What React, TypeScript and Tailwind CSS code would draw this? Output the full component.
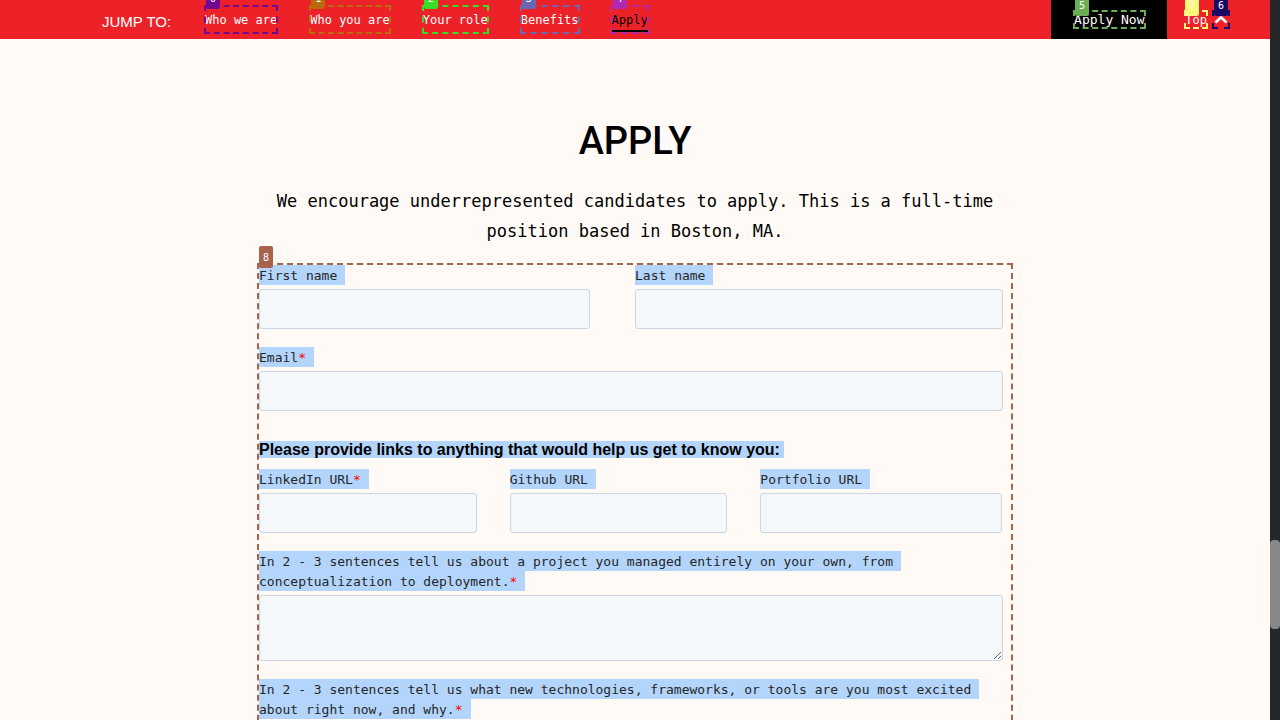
import type { ReactNode } from "react";

const MONO = "font-['DejaVu_Sans_Mono',monospace]";

function Badge({ n, className }: { n: number; className: string }) {
  return (
    <span
      className={`absolute flex h-[22px] w-[14px] items-center justify-center rounded-[2px] pt-[2px] font-['DejaVu_Sans_Mono',monospace] text-[10px] leading-none text-white ${className}`}
    >
      {n}
    </span>
  );
}

const LINKS = [
  { text: "Who we are", outline: "outline-[#720891]", badge: "bg-[#720891]", color: "text-white" },
  { text: "Who you are", outline: "outline-[#b96a0a]", badge: "bg-[#b96a0a]", color: "text-white" },
  { text: "Your role", outline: "outline-[#38dd25]", badge: "bg-[#38dd25]", color: "text-white" },
  { text: "Benefits", outline: "outline-[#6a68b5]", badge: "bg-[#6a68b5]", color: "text-white" },
  { text: "Apply", outline: "outline-[#b028b4]", badge: "bg-[#b028b4]", color: "text-black" },
];

function Header() {
  return (
    <header className="flex h-[39px] shrink-0 items-stretch bg-[#ed2229] pl-[102px] text-white">
      <div className="flex w-[103px] items-center pt-[6px] font-['Liberation_Sans',sans-serif] text-[15px] whitespace-nowrap">
        JUMP TO:
      </div>
      <nav className="flex items-center gap-[33px]">
        {LINKS.map((l, i) => (
          <a
            key={l.text}
            href="#apply"
            className={`relative flex h-[27px] items-center text-[12px] whitespace-nowrap outline-2 -outline-offset-1 outline-dashed ${MONO} ${l.color} ${l.outline}`}
          >
            {l.text}
            {l.text === "Apply" && <span className="absolute inset-x-0 bottom-px h-[2px] bg-black" />}
            <Badge n={i} className={`-top-[19px] left-px ${l.badge}`} />
          </a>
        ))}
      </nav>
      <div className="ml-auto flex w-[116px] items-center justify-center bg-black">
        <a
          href="#apply"
          className={`relative flex h-[17px] items-center text-[13px] whitespace-nowrap outline-2 -outline-offset-1 outline-[#6cae55] outline-dashed ${MONO}`}
        >
          Apply Now
          <Badge n={5} className="-top-[17px] left-px bg-[#6cae55]" />
        </a>
      </div>
      <div className="flex items-center gap-[6px] pr-[41px] pl-[18px]">
        <a
          href="#top"
          className={`relative flex h-[17px] items-center text-[12px] outline-2 -outline-offset-1 outline-[#fdf67c] outline-dashed ${MONO}`}
        >
          Top
          <Badge n={7} className="-top-[17px] left-0 bg-[#fdf67c]" />
        </a>
        <a
          href="#top"
          aria-label="Back to top"
          className="relative flex h-[17px] w-[16px] items-center justify-center outline-2 -outline-offset-1 outline-[#1b0764] outline-dashed"
        >
          <svg viewBox="0 0 14 9" className="h-[9px] w-[14px]" fill="none" stroke="#fff" strokeWidth="2.6">
            <path d="M1.500 7.500 7 2.300l5.500 5.200" />
          </svg>
          <Badge n={6} className="-top-[17px] left-px bg-[#1b0764]" />
        </a>
      </div>
    </header>
  );
}

function Field({
  id,
  label,
  required,
  area,
  className,
}: {
  id: string;
  label: ReactNode;
  required?: boolean;
  area?: boolean;
  className: string;
}) {
  const box = "mt-[3px] block w-full rounded-[3px] border border-[#cbd6e2] bg-[#f5f8fa] px-[10px]";
  return (
    <div className={`mb-[18px] ${className}`}>
      <label htmlFor={id} className={`block pt-px text-[13px] leading-[20px] text-[#262626] ${MONO}`}>
        <span className="box-decoration-clone bg-[#b3d5fb] pt-[3px] pr-[8px] pb-[2px]">
          {label}
          {required && <span className="text-[#f00]">*</span>}
        </span>
      </label>
      {area ? (
        <textarea id={id} className={`${box} h-[66px] resize`} />
      ) : (
        <input id={id} type="text" className={`${box} h-[40px]`} />
      )}
    </div>
  );
}

export default function App() {
  return (
    <div className="flex h-screen overflow-hidden bg-[#fffaf5]">
      <div className="flex min-w-0 flex-1 flex-col overflow-hidden">
        <Header />
        <main id="apply" className="min-h-0 flex-1 overflow-hidden pt-[77px] text-black">
          <h1 className="text-center font-['Roboto',sans-serif] text-[38px] leading-[50px] font-medium">APPLY</h1>
          <p className={`mx-auto mt-5 max-w-[752px] text-center text-[17px] leading-[30px] ${MONO}`}>
            We encourage underrepresented candidates to apply. This is a full-time position based in Boston, MA.
          </p>
          <form className="relative mx-auto mt-[19px] max-w-[752px] outline-2 outline-[#a9634d] outline-dashed">
            <Badge n={8} className="-top-[19px] left-0 bg-[#a9634d]" />
            <div className="grid grid-cols-2">
              <Field id="first" label="First name" className="pr-[45px]" />
              <Field id="last" label="Last name" className="pr-[8px]" />
            </div>
            <Field id="email" label="Email" required className="pr-[8px]" />
            <h3 className="pt-[2px] font-['Liberation_Sans',sans-serif] text-[16px] leading-[38px] font-bold">
              <span className="bg-[#b3d5fb] pr-[4px]">
                Please provide links to anything that would help us get to know you:
              </span>
            </h3>
            <div className="grid grid-cols-3">
              <Field id="linkedin" label="LinkedIn URL" required className="pr-[33px]" />
              <Field id="github" label="Github URL" className="pr-[33px]" />
              <Field id="portfolio" label="Portfolio URL" className="pr-[9px]" />
            </div>
            <Field
              id="project"
              area
              required
              label="In 2 - 3 sentences tell us about a project you managed entirely on your own, from conceptualization to deployment."
              className="pr-[8px]"
            />
            <Field
              id="tech"
              area
              required
              label="In 2 - 3 sentences tell us what new technologies, frameworks, or tools are you most excited about right now, and why."
              className="pr-[8px]"
            />
          </form>
        </main>
      </div>
      <div className="flex w-[10px] shrink-0 flex-col bg-[#252629]">
        <div className="h-3/4" />
        <div className="h-[89px] rounded-[4px] bg-[#878787]" />
      </div>
    </div>
  );
}
